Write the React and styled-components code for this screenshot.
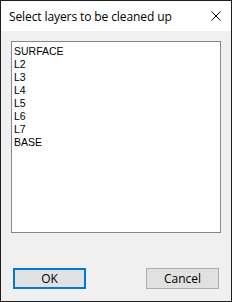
import React from "react";
import styled, { createGlobalStyle } from "styled-components";

const Global = createGlobalStyle`
  html, body { margin: 0; padding: 0; background: #ffffff; }
  * { box-sizing: border-box; }
`;

const Window = styled.div`
  width: 232px;
  height: 302px;
  border: 1px solid #1e1e1e;
  display: flex;
  flex-direction: column;
  background: #f0f0f0;
`;

const TitleBar = styled.div`
  height: 30px;
  background: #ffffff;
  display: flex;
  align-items: center;
  justify-content: space-between;
  padding: 0 10px 0 8px;
`;

const Title = styled.span`
  font-family: "Open Sans", "Noto Sans", sans-serif;
  font-size: 12px;
  color: #000;
  letter-spacing: -0.1px;
`;

const Close = styled.div`
  width: 10px;
  height: 10px;
  display: flex;
`;

const Body = styled.div`
  flex: 1;
  display: flex;
  flex-direction: column;
  padding: 10px 10px 12px;
`;

const ListBox = styled.div`
  height: 192px;
  background: #ffffff;
  border: 1px solid #828790;
  padding: 3px 2px;
  display: flex;
  flex-direction: column;
`;

const Item = styled.div`
  font-family: "Liberation Sans", Arial, sans-serif;
  font-size: 10.5px;
  line-height: 13px;
  height: 13px;
  color: #000;
  white-space: nowrap;
`;

const Buttons = styled.div`
  margin-top: 35px;
  padding: 0 2px;
  display: flex;
  justify-content: space-between;
`;

const Button = styled.button`
  width: 73px;
  height: 21px;
  margin: 0;
  padding: 0;
  background: #e1e1e1;
  border: ${(p) => (p.$default ? "2px solid #0078d7" : "1px solid #adadad")};
  font-family: "Open Sans", "Noto Sans", sans-serif;
  font-size: 12px;
  color: #000;
  display: flex;
  align-items: center;
  justify-content: center;
  line-height: 1;
`;

const layers = ["SURFACE", "L2", "L3", "L4", "L5", "L6", "L7", "BASE"];

export default function App() {
  return (
    <>
      <Global />
      <Window>
        <TitleBar>
          <Title>Select layers to be cleaned up</Title>
          <Close>
            <svg width="10" height="10" viewBox="0 0 10 10">
              <path d="M0.5 0.5 L9.5 9.5 M9.5 0.5 L0.5 9.5" stroke="#000" strokeWidth="1" fill="none" />
            </svg>
          </Close>
        </TitleBar>
        <Body>
          <ListBox>
            {layers.map((l) => (
              <Item key={l}>{l}</Item>
            ))}
          </ListBox>
          <Buttons>
            <Button $default>OK</Button>
            <Button>Cancel</Button>
          </Buttons>
        </Body>
      </Window>
    </>
  );
}
